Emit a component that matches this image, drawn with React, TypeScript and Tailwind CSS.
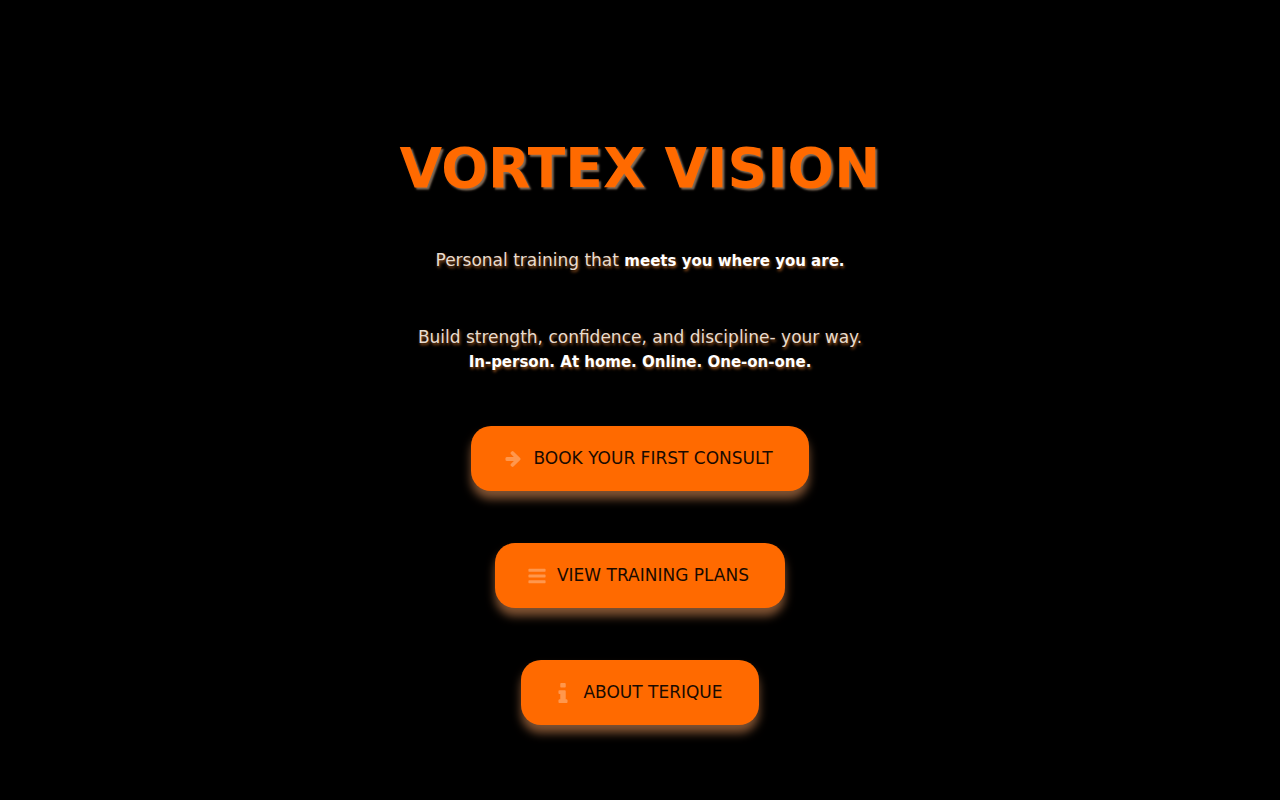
import type { ReactNode } from 'react';

type Action = {
  label: string;
  href: string;
  icon: ReactNode;
};

const actions: Action[] = [
  {
    label: 'BOOK YOUR FIRST CONSULT',
    href: '#consult',
    icon: (
      <svg viewBox="0 179 1472 1560" className="h-4 w-4" fill="currentColor" aria-hidden="true">
        <path d="M1472 960q0 54-37 91l-651 651q-39 37-91 37-51 0-90-37l-75-75q-38-38-38-91t38-91l293-293h-704q-52 0-84.5-37.5t-32.5-90.5v-128q0-53 32.5-90.5t84.5-37.5h704l-293-294q-38-36-38-90t38-90l75-75q38-38 90-38 53 0 91 38l651 651q37 35 37 90z" />
      </svg>
    ),
  },
  {
    label: 'VIEW TRAINING PLANS',
    href: '#plans',
    icon: (
      <svg viewBox="0 0 1792 1792" className="h-5 w-5" fill="currentColor" aria-hidden="true">
        <path d="M1664 1344v128q0 26-19 45t-45 19h-1408q-26 0-45-19t-19-45v-128q0-26 19-45t45-19h1408q26 0 45 19t19 45zm0-512v128q0 26-19 45t-45 19h-1408q-26 0-45-19t-19-45v-128q0-26 19-45t45-19h1408q26 0 45 19t19 45zm0-512v128q0 26-19 45t-45 19h-1408q-26 0-45-19t-19-45v-128q0-26 19-45t45-19h1408q26 0 45 19t19 45z" />
      </svg>
    ),
  },
  {
    label: 'ABOUT TERIQUE',
    href: '#about',
    icon: (
      <svg viewBox="0 128 640 1408" className="h-5 w-5" fill="currentColor" aria-hidden="true">
        <path d="M640 1344v128q0 26-19 45t-45 19h-512q-26 0-45-19t-19-45v-128q0-26 19-45t45-19h64v-384h-64q-26 0-45-19t-19-45v-128q0-26 19-45t45-19h384q26 0 45 19t19 45v576h64q26 0 45 19t19 45zm-128-1152v192q0 26-19 45t-45 19h-256q-26 0-45-19t-19-45v-192q0-26 19-45t45-19h256q26 0 45 19t19 45z" />
      </svg>
    ),
  },
];

function ActionLink({ label, href, icon }: Action) {
  return (
    <a
      href={href}
      className="flex items-center gap-2 rounded-[20px] bg-[#ff6a00] pr-9 pl-[30px] py-5 text-[17px] leading-[25px] text-[#1a0a00] shadow-[0_8px_10px_rgba(255,166,102,0.5)] transition hover:bg-[#ff7d1f]"
    >
      <span className="flex w-6 justify-center text-white/30">{icon}</span>
      {label}
    </a>
  );
}

export default function App() {
  return (
    <main className="flex min-h-screen flex-col items-center bg-black px-4 pt-32 pb-16 text-center font-['DejaVu_Sans',sans-serif]">
      <h1 className="text-[55px] leading-20 font-bold text-[#ff6a00] [text-shadow:2px_2px_2px_rgba(255,215,180,0.5)]">
        VORTEX VISION
      </h1>

      <div className="mt-10 text-[17px] leading-6 text-[#e8dccf] [text-shadow:1px_2px_3px_rgba(255,140,50,0.6)]">
        <p>
          Personal training that <strong className="text-[15px] text-white">meets you where you are.</strong>
        </p>
        <p className="mt-13">
          Build strength, confidence, and discipline- your way.
          <br />
          <strong className="text-[15px] text-white">In-person. At home. Online. One-on-one.</strong>
        </p>
      </div>

      <nav className="mt-13 flex flex-col items-center gap-13">
        {actions.map((action) => (
          <ActionLink key={action.href} {...action} />
        ))}
      </nav>
    </main>
  );
}
